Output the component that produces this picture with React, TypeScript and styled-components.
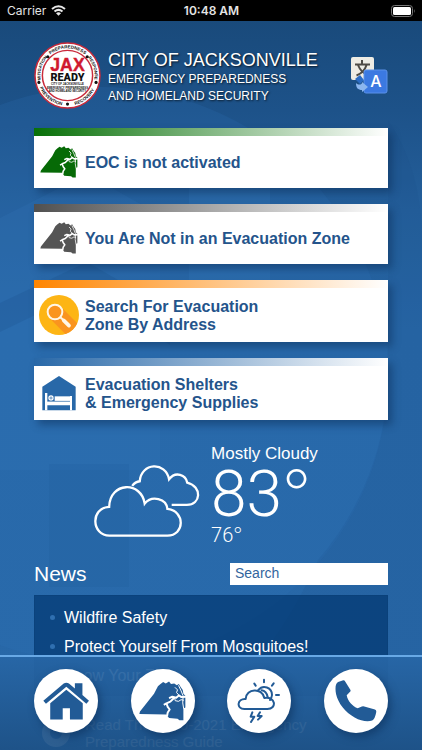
import React from "react";
import styled, { createGlobalStyle } from "styled-components";

const sans = '"Liberation Sans", Arial, sans-serif';
const GUTTER = 34;

const GlobalStyle = createGlobalStyle`
  *, *::before, *::after { box-sizing: border-box; }
  body { margin: 0; background: #194a7c; font-family: ${sans}; color: #fff; }
  button { font: inherit; color: inherit; border: 0; padding: 0; background: none; cursor: pointer; }
  h1, h2, p, ul { margin: 0; padding: 0; font-weight: 400; }
`;

const Screen = styled.div`
  position: relative;
  display: flex;
  flex-direction: column;
  height: 100vh;
  overflow: hidden;
  background: linear-gradient(#194a7b 20px, #1d5289 110px, #245f9b 210px, #2767a7 330px, #2868a8 100%);
`;

const Watermark = styled.svg`
  position: absolute;
  top: 0;
  left: 0;
  pointer-events: none;
`;

const StatusBar = styled.div`
  position: relative;
  display: grid;
  grid-template-columns: 1fr auto 1fr;
  align-items: center;
  height: 21px;
  flex: none;
  padding: 0 6px 0 7px;
  background: #000;
  color: #e4e4e4;
  font: 400 12px/21px Inter, sans-serif;
`;

const Carrier = styled.span`
  display: flex;
  align-items: center;
  gap: 5px;
`;

const Clock = styled.time`
  font-size: 12px;
  font-weight: 600;
`;

const Battery = styled.svg`
  justify-self: end;
`;

const Scroller = styled.main`
  position: relative;
  flex: 1;
  min-height: 0;
  overflow-y: auto;
  scrollbar-width: none;
  padding: 20px ${GUTTER}px 96px;
`;

const Header = styled.header`
  display: flex;
  align-items: center;
  gap: 7px;
  height: 68px;
`;

const HeaderText = styled.div`
  flex: 1;
  padding-top: 4px;
  white-space: nowrap;
  text-shadow: 1px 1px 2px rgba(0, 0, 0, 0.75);
`;

const Title = styled.h1`
  font-size: 18px;
  line-height: 22px;
`;

const Subtitle = styled.p`
  font-size: 12px;
  line-height: 17px;
`;

const TranslateButton = styled.button`
  display: flex;
  flex: none;
`;

const Cards = styled.div`
  display: flex;
  flex-direction: column;
  gap: 16px;
  margin-top: 19px;
`;

const Card = styled.button<{ $tint: string }>`
  display: flex;
  align-items: center;
  width: 100%;
  min-height: 60px;
  padding: 8px 3px 0;
  background: linear-gradient(90deg, ${(p) => p.$tint}, #fff) 0 0 / 100% 8px no-repeat, linear-gradient(#fff, #fff) 0 8px no-repeat;
  box-shadow: 4px 5px 8px rgba(8, 40, 80, 0.45);
  color: #24548b;
  font-size: 16px;
  font-weight: 700;
  line-height: 18px;
  text-align: left;
`;

const CardIcon = styled.span`
  display: flex;
  justify-content: center;
  width: 44px;
  flex: none;
`;

const CardLabel = styled.span`
  padding: 10px 0 8px 4px;
  white-space: pre-line;
`;

const Weather = styled.section`
  display: flex;
  justify-content: center;
  align-items: center;
  gap: 11px;
  margin-top: 24px;
  padding-right: 10px;
`;

const Clouds = styled.svg`
  flex: none;
  margin-top: 12px;
`;

const Condition = styled.p`
  font-size: 17px;
  line-height: 20px;
`;

const Temperature = styled.p`
  font: 300 64px/58px Roboto, sans-serif;
`;

const LowTemperature = styled.p`
  font: 300 20px/22px Roboto, sans-serif;
`;

const Degree = styled.span`
  font-family: Inter, sans-serif;
  font-weight: 200;
`;

const NewsHead = styled.div`
  display: flex;
  align-items: center;
  justify-content: space-between;
  margin-top: 16px;
`;

const NewsTitle = styled.h2`
  font-size: 21px;
  line-height: 24px;
`;

const SearchInput = styled.input`
  width: 158px;
  height: 22px;
  padding: 0 5px 3px;
  border: 0;
  border-radius: 0;
  background: #fff;
  color: #24548b;
  font: 14px/18px ${sans};
  &::placeholder { color: #33659d; opacity: 1; }
`;

const NewsList = styled.ul`
  margin-top: 9px;
  padding: 7px 15px 5px;
  border: 1px solid rgba(8, 60, 115, 0.35);
  background: rgba(0, 53, 110, 0.68);
  list-style: none;
`;

const NewsItem = styled.li`
  display: flex;
  align-items: center;
  gap: 9px;
  font-size: 16px;
  line-height: 29px;
  &::before {
    content: "";
    width: 5px;
    height: 5px;
    border-radius: 50%;
    background: #2f6fb0;
  }
`;

const NewsLink = styled.a`
  color: #fff;
  text-decoration: none;
`;

const Guide = styled.a`
  display: flex;
  align-items: center;
  gap: 14px;
  margin-top: 20px;
  padding-left: 7px;
  color: #fff;
  font-size: 15px;
  line-height: 17px;
  text-decoration: none;
`;

const TabBar = styled.nav`
  position: absolute;
  right: 0;
  bottom: 0;
  left: 0;
  display: flex;
  justify-content: space-between;
  padding: 12px ${GUTTER}px 17px;
  border-top: 2px solid #68a9e6;
  background: linear-gradient(rgba(39, 102, 166, 0.93), rgba(29, 81, 134, 0.93));
`;

const Tab = styled.button`
  display: flex;
  align-items: center;
  justify-content: center;
  width: 64px;
  height: 64px;
  border-radius: 50%;
  background: #fff;
  color: #225b96;
  box-shadow: 3px 4px 8px rgba(8, 40, 80, 0.5);
`;

function Emblem() {
  const dots = [[14, 15], [54, 15], [5, 41], [63, 41], [34, 63]];
  return (
    <svg width="67" height="67" viewBox="0 0 68 68" role="img" aria-label="JAX Ready">
      <defs>
        <path id="ringTop" d="M14.500 14.500A27.500 27.500 0 0 1 53.500 14.500" />
        <path id="ringLeft" d="M7.200 40A27.500 27.500 0 0 1 14.500 14.500" />
        <path id="ringRight" d="M53.500 14.500A27.500 27.500 0 0 1 60.800 40" />
        <path id="ringLowLeft" d="M4 41A30.800 30.800 0 0 0 34 64.800" />
        <path id="ringLowRight" d="M34 64.800A30.800 30.800 0 0 0 64 41" />
      </defs>
      <circle cx="34" cy="34" r="33" fill="#fff" stroke="#c92a3b" strokeWidth="1.500" />
      <circle cx="34" cy="34" r="25.500" fill="none" stroke="#c92a3b" strokeWidth="1.500" />
      <g fontFamily={sans} fontWeight="700" fontSize="4.600" fill="#111" textAnchor="middle">
        <text><textPath href="#ringTop" startOffset="50%">PREPAREDNESS</textPath></text>
        <text fontSize="4.300"><textPath href="#ringLeft" startOffset="50%">MITIGATION</textPath></text>
        <text fontSize="4.300"><textPath href="#ringRight" startOffset="50%">RESPONSE</textPath></text>
        <text><textPath href="#ringLowLeft" startOffset="50%">PREVENTION</textPath></text>
        <text><textPath href="#ringLowRight" startOffset="50%">RECOVERY</textPath></text>
      </g>
      {dots.map(([x, y]) => <circle key={`${x}-${y}`} cx={x} cy={y} r="1.600" fill="#111" />)}
      <g textAnchor="middle" fontFamily={sans} fontWeight="700">
        <text x="34" y="29" fontSize="18" fill="#d0192e" stroke="#d0192e" strokeWidth="0.400">JAX</text>
        <text x="34" y="40" fontSize="11" fill="#111" fontFamily="Roboto, sans-serif" fontWeight="900">READY</text>
        <g fontSize="2.800" fill="#111">
          <text x="34" y="44">CITY OF JACKSONVILLE</text>
          <text x="34" y="47.500">EMERGENCY PREPAREDNESS</text>
          <text x="34" y="51">AND HOMELAND SECURITY</text>
        </g>
      </g>
    </svg>
  );
}

function TranslateIcon() {
  return (
    <svg width="38" height="40" viewBox="0 0 38 40" aria-hidden="true">
      <rect x="1" y="2" width="23" height="23" rx="2" fill="#eeece4" />
      <path d="M12 5v4M5 9.500h15M16.500 10c-1.500 5-5 8.500-10 10.500M8 10c2 5 5 8.500 10 10" fill="none" stroke="#4e4b45" strokeWidth="2" />
      <path d="M5 24l5-4 4 5-4 4z" fill="#2c6cc4" />
      <rect x="14" y="15" width="23" height="23" rx="2" fill="#3b79e1" stroke="#5b91e9" />
      <path d="M6 28c2 2 5 2 6 0v-1l6 5-6 5v-2c-4 0-6-2-6-7z" fill="#8bb6ef" />
      <text x="26" y="32" fill="#fff" fontSize="16" fontWeight="500" textAnchor="middle" fontFamily="Inter, sans-serif">A</text>
    </svg>
  );
}

function CountyIcon({ size, color }: { size: number; color: string }) {
  return (
    <svg width={size} height={Math.round(size * 0.85)} viewBox="354 79 144 122" aria-hidden="true">
      <path
        fill={color}
        d="M355 180l2-8 43-54 12-23 7-6 9-7 8 4 10-6 6 8 10-2 8 6 6-4 6 10 6 8 2 12 6 6v36l-6 3v36h-12l-6-5-26-2-8-11z"
      />
      <g fill="none" stroke="#fff" strokeLinejoin="round">
        <path d="M498 127l-14 1-8-5-8 7-12-3-10 4M462 130l-12 12-12 5-8 5M438 147l4 11 6 8-6 9-2 11" strokeWidth="6" />
        <path d="M464 98l8 8-3 8 9 10M463 130l2 9 10 2 8-5 8 2" strokeWidth="3" />
        <path d="M475 92l8 17 6 15M489 128l-1 18 3 18" strokeWidth="3" />
      </g>
    </svg>
  );
}

function MagnifierBadge() {
  return (
    <svg width="40" height="40" viewBox="0 0 120 120" aria-hidden="true">
      <defs><clipPath id="disc"><circle cx="60" cy="60" r="60" /></clipPath></defs>
      <circle cx="60" cy="60" r="60" fill="#fdb515" />
      <path d="M64 34l56 56v30H82L32 70z" fill="#fa941f" clipPath="url(#disc)" />
      <circle cx="48" cy="51" r="22" fill="#fa941f" stroke="#fff6e6" strokeWidth="6" />
      <path d="M64 67l10 9" stroke="#fff6e6" strokeWidth="6" />
      <path d="M74 76l16 16" stroke="#fff6e6" strokeWidth="11" strokeLinecap="round" />
    </svg>
  );
}

function ShelterIcon() {
  return (
    <svg width="34" height="36" viewBox="0 0 102 106" aria-hidden="true">
      <path d="M1 105V34L51 2l50 32v71z" fill="#2868a8" />
      <path d="M9 53h7v25h68V62h6v43h-6V90H16v15H9z" fill="#fff" />
      <circle cx="27" cy="68" r="8" fill="#fff" />
      <path d="M38 63h46v14H38z" fill="#fff" />
      <path d="M22 68h10M27 63v10" stroke="#2868a8" strokeWidth="2" />
      <path d="M16 78h68v8H16z" fill="#fff" />
      <path d="M16 78h68" stroke="#2868a8" strokeWidth="2" />
    </svg>
  );
}

function CloudsIcon() {
  return (
    <Clouds width="106" height="76" viewBox="40 82 322 226" fill="none" stroke="#fff" strokeWidth="7" aria-hidden="true">
      <path d="M87 300C32 300 28 216 86 213C88 136 184 134 194 203C216 176 260 188 263 219C318 225 316 300 263 300z" />
      <path d="M156 149C162 141 170 136 179 135C183 78 258 74 268 129C288 103 319 116 323 139C370 151 365 207 322 207H276" />
    </Clouds>
  );
}

function HouseIcon() {
  return (
    <svg width="46" height="38" viewBox="66 80 140 114" aria-hidden="true" fill="currentColor">
      <path d="M67 136l62-52q8-5 16 0l18 15V83h23v36l20 17-8 9-61-51-62 51z" />
      <path d="M88 144l49-41 50 41v49h-39v-34h-22v34H88z" />
    </svg>
  );
}

function StormIcon() {
  return (
    <svg width="44" height="46" viewBox="82 70 132 138" fill="none" stroke="currentColor" strokeWidth="6" strokeLinecap="round" strokeLinejoin="round" aria-hidden="true">
      <path d="M104 163C79 163 82 131 108 133C109 101 158 98 164 130C198 124 203 163 173 163z" />
      <path d="M146 106C160 89 187 98 187 121Q186 130 181 136M156 107Q170 109 174 127" />
      <path d="M163 75v8M134 87l4 6M192 86l-5 7M199 121h9" />
      <path d="M128 173l-5 13h11l-10 16M151 173l-7 11h12l-11 11" />
    </svg>
  );
}

function PhoneIcon() {
  return (
    <svg width="42" height="42" viewBox="384 78 122 122" fill="currentColor" aria-hidden="true">
      <path d="M393 84l15-5q4 0 6 4l15 24q1 4-2 6l-9 9c3 17 17 32 32 38l12-5q4-1 7 0l31 9q4 2 4 6-4 22-12 26c-14 5-33 1-51-9-27-15-48-41-54-68-3-17-2-31 6-35z" />
    </svg>
  );
}

const cards = [
  { label: "EOC is not activated", tint: "#087008", icon: <CountyIcon size={38} color="#066a06" /> },
  { label: "You Are Not in an Evacuation Zone", tint: "#505050", icon: <CountyIcon size={38} color="#555" /> },
  { label: "Search For Evacuation\nZone By Address", tint: "#ff8500", icon: <MagnifierBadge /> },
  { label: "Evacuation Shelters\n& Emergency Supplies", tint: "#2868a8", icon: <ShelterIcon /> },
];

const news = ["Wildfire Safety", "Protect Yourself From Mosquitoes!", "Know Your Zone"];

const tabs = [
  { label: "Home", icon: <HouseIcon /> },
  { label: "Evacuation zones", icon: <CountyIcon size={47} color="#225b96" /> },
  { label: "Weather", icon: <StormIcon /> },
  { label: "Call", icon: <PhoneIcon /> },
];

export default function App() {
  return (
    <Screen>
      <GlobalStyle />
      <Watermark width="422" height="750" viewBox="0 0 422 750" aria-hidden="true">
        <defs>
          <clipPath id="seal"><circle cx="100" cy="375" r="288" /></clipPath>
        </defs>
        <circle cx="100" cy="375" r="288" fill="#3077bb" opacity="0.180" />
        <g clipPath="url(#seal)">
          <path d="M0 218L87 174L160 215V470H0z" fill="#3d86cc" opacity="0.130" />
          <path d="M189 180H270V300H189z" fill="#3d86cc" opacity="0.160" />
          <path d="M0 303L87 262L170 310V345L87 290L0 332z" fill="#164a80" opacity="0.180" />
        </g>
        <path d="M49 464h80v123H49z" fill="#1d5692" opacity="0.150" />
        <path d="M318 560A288 288 0 0 0 388 375V120Q422 170 422 240V750H150Q260 690 318 560z" fill="#174d84" opacity="0.120" />
      </Watermark>
      <StatusBar>
        <Carrier>
          Carrier
          <svg width="15" height="11" viewBox="0 0 15 11" fill="none" stroke="#e8e8e8" strokeWidth="2" aria-label="Wi-Fi">
            <path d="M1 4Q7.500 -1.500 14 4M3.500 6.600Q7.500 3.200 11.500 6.600" />
            <path d="M7.500 10.800L5 8.300Q7.500 6.400 10 8.300z" fill="#e8e8e8" stroke="none" />
          </svg>
        </Carrier>
        <Clock>10:48 AM</Clock>
        <Battery width="25" height="12" viewBox="0 0 25 12" aria-label="Battery full">
          <rect x="0.500" y="0.500" width="21" height="11" rx="3" fill="none" stroke="#777" />
          <rect x="2" y="2" width="18" height="8" rx="1.500" fill="#fff" />
          <path d="M23 4q1.500 2 0 4z" fill="#777" />
        </Battery>
      </StatusBar>
      <Scroller>
        <Header>
          <Emblem />
          <HeaderText>
            <Title>CITY OF JACKSONVILLE</Title>
            <Subtitle>EMERGENCY PREPAREDNESS<br />AND HOMELAND SECURITY</Subtitle>
          </HeaderText>
          <TranslateButton aria-label="Translate"><TranslateIcon /></TranslateButton>
        </Header>
        <Cards>
          {cards.map((c) => (
            <Card key={c.label} $tint={c.tint}>
              <CardIcon>{c.icon}</CardIcon>
              <CardLabel>{c.label}</CardLabel>
            </Card>
          ))}
        </Cards>
        <Weather>
          <CloudsIcon />
          <div>
            <Condition>Mostly Cloudy</Condition>
            <Temperature>83<Degree>°</Degree></Temperature>
            <LowTemperature>76<Degree>°</Degree></LowTemperature>
          </div>
        </Weather>
        <NewsHead>
          <NewsTitle>News</NewsTitle>
          <SearchInput type="search" placeholder="Search" aria-label="Search news" />
        </NewsHead>
        <NewsList>
          {news.map((n) => (
            <NewsItem key={n}><NewsLink href="#news">{n}</NewsLink></NewsItem>
          ))}
        </NewsList>
        <Guide href="#guide">
          <svg width="30" height="30" viewBox="0 0 30 30" aria-hidden="true">
            <circle cx="15" cy="15" r="10" fill="none" stroke="#fff" strokeWidth="8" />
          </svg>
          <span>Read The 2020-2021 Emergency<br />Preparedness Guide</span>
        </Guide>
      </Scroller>
      <TabBar aria-label="Main">
        {tabs.map((t) => (
          <Tab key={t.label} aria-label={t.label}>{t.icon}</Tab>
        ))}
      </TabBar>
    </Screen>
  );
}
